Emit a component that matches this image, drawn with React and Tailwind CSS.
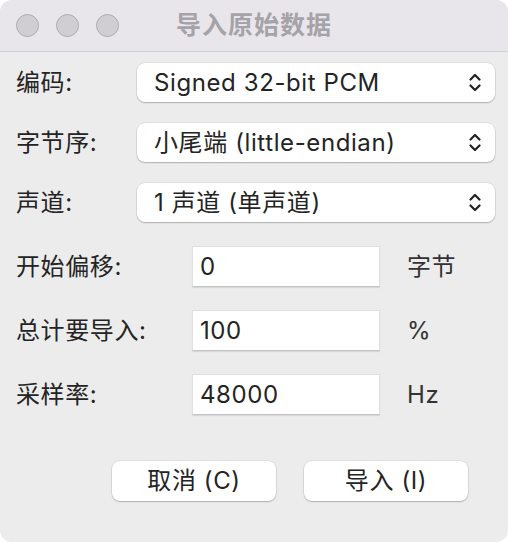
import React from 'react';

const FONT = { fontFamily: '"Inter", "Noto Sans CJK SC", "Noto Sans", sans-serif' };

const Chevrons = () => (
  <svg width="12" height="19" viewBox="0 0 12 19" fill="none" stroke="#222" strokeWidth="2.2" strokeLinecap="round" strokeLinejoin="round">
    <polyline points="1.5,6.5 6,2 10.5,6.5" />
    <polyline points="1.5,12.5 6,17 10.5,12.5" />
  </svg>
);

const SELECTS = [
  { label: '编码:', value: 'Signed 32-bit PCM' },
  { label: '字节序:', value: '小尾端 (little-endian)' },
  { label: '声道:', value: '1 声道 (单声道)' },
];

const FIELDS = [
  { label: '开始偏移:', value: '0', unit: '字节' },
  { label: '总计要导入:', value: '100', unit: '%' },
  { label: '采样率:', value: '48000', unit: 'Hz' },
];

export default function App() {
  return (
    <div className="w-[508px] h-[542px] bg-white" style={FONT}>
      <div className="w-full h-full rounded-[12px] overflow-hidden bg-[#ececec] flex flex-col">
        {/* TITLE BAR */}
        <div className="relative h-[52px] bg-[#e8e6eb] border-b border-[#d2d0d4] flex items-center pl-[16px] gap-[17px] shrink-0">
          {[0, 1, 2].map(i => (
            <div key={i} className="w-[23px] h-[23px] rounded-full bg-[#d0ced3] border border-[#aeacb1]" />
          ))}
          <div className="absolute inset-0 flex items-center justify-center pointer-events-none">
            <span className="text-[25px] font-bold text-[#a5a3a8] tracking-[1px]">导入原始数据</span>
          </div>
        </div>

        {/* BODY */}
        <div className="flex flex-col pt-[11px] text-[#242424] text-[24px] leading-none tracking-[0.6px]">
          <div className="flex flex-col gap-[21px]">
            {SELECTS.map(s => (
              <div key={s.label} className="flex items-center h-[39px]">
                <div className="w-[137px] pl-[16px]">{s.label}</div>
                <div className="w-[358px] h-[39px] bg-white rounded-[8px] shadow-[0_0_0_0.5px_rgba(0,0,0,0.1),0_1px_1.5px_rgba(0,0,0,0.22)] flex items-center justify-between pl-[17px] pr-[14px]">
                  <span>{s.value}</span>
                  <Chevrons />
                </div>
              </div>
            ))}
          </div>

          <div className="flex flex-col gap-[23px] mt-[24px]">
            {FIELDS.map(f => (
              <div key={f.label} className="flex items-center h-[41px]">
                <div className="w-[192px] pl-[16px]">{f.label}</div>
                <div className="w-[188px] h-[41px] bg-white border border-[#e0e0e0] border-b-[#c4c4c4] shadow-[0_1px_1px_rgba(0,0,0,0.08)] flex items-center pl-[7px]">
                  <span>{f.value}</span>
                </div>
                <div className="pl-[27px] text-[#333]">{f.unit}</div>
              </div>
            ))}
          </div>

          <div className="flex gap-[28px] pl-[112px] mt-[46px]">
            {['取消 (C)', '导入 (I)'].map(b => (
              <button key={b} className="w-[164px] h-[40px] bg-white rounded-[8px] shadow-[0_0_0_0.5px_rgba(0,0,0,0.1),0_1px_1.5px_rgba(0,0,0,0.22)] text-[#242424] flex items-center justify-center">
                {b}
              </button>
            ))}
          </div>
        </div>
      </div>
    </div>
  );
}
